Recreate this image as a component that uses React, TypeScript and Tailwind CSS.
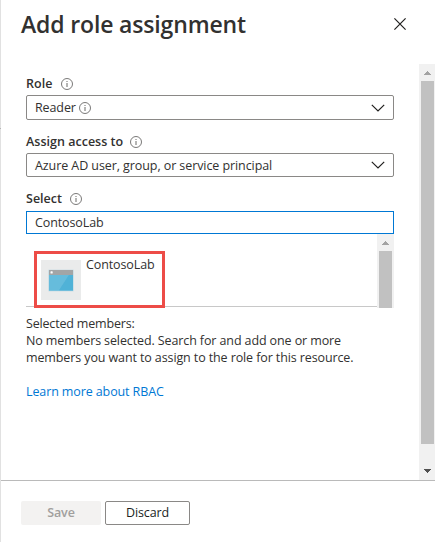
import React from "react";

function InfoIcon({ className = "" }: { className?: string }) {
  return (
    <svg viewBox="0 0 12 12" className={`h-3 w-3 shrink-0 ${className}`} fill="none">
      <circle cx="6" cy="6" r="5.5" stroke="#6b6a69" strokeWidth="0.9" />
      <path d="M6 5v4M6 3v1" stroke="#6b6a69" strokeWidth="1" />
    </svg>
  );
}

function Chevron() {
  return (
    <svg viewBox="0 0 14 8" className="h-2 w-3.5 shrink-0" fill="none">
      <path d="M0.8 0.8L7 7L13.2 0.8" stroke="#201f1e" strokeWidth="1.2" />
    </svg>
  );
}

function Arrow({ down = false }: { down?: boolean }) {
  return (
    <svg viewBox="0 0 7 4" className="h-1 w-[7px]" shapeRendering="crispEdges">
      {down ? <path d="M0 0h7v1h-1v1h-1v1h-1v1h-1v-1h-1v-1h-1v-1h-1z" fill="#505050" /> : <path d="M0 4h7v-1h-1v-1h-1v-1h-1v-1h-1v1h-1v1h-1v1h-1z" fill="#a3a3a3" />}
    </svg>
  );
}

function AppWindowIcon() {
  return (
    <svg viewBox="0 0 26 23" className="h-[23px] w-[26px]">
      <rect x="0" y="0.5" width="26" height="22" rx="1" fill="#cfe0e6" />
      <rect x="1" y="1" width="24" height="5" fill="#a3a5a6" />
      <rect x="1" y="6" width="24" height="15.5" fill="#59b4d9" />
      <path d="M1 6h20L11 21.5H1z" fill="#66bcdc" />
      <path d="M21 6h4v15.5H11z" fill="#50b2d7" />
      <rect x="2.5" y="2.3" width="2.2" height="2.2" rx="0.6" fill="#fff" />
    </svg>
  );
}

function Label({ text, className }: { text: string; className: string }) {
  return (
    <div className="flex h-[18px] items-center">
      <span className={`-mt-0.5 whitespace-nowrap font-semibold tracking-[0.02px] ${className}`}>{text}</span>
      <InfoIcon />
    </div>
  );
}

export default function App() {
  return (
    <div className="flex h-[542px] w-[435px] overflow-hidden bg-white font-['Open_Sans','Noto_Sans',sans-serif] text-[12.5px] leading-[17px] tracking-[-0.11px] text-[#323130]">
      <div className="flex w-px shrink-0 flex-col bg-[#e1e1e1]">
        <div className="mt-32 h-px bg-[#b5b5b5]" />
      </div>
      <div className="flex min-w-0 flex-1 flex-col">
        <header className="flex h-16 shrink-0 items-start justify-between pl-5 pr-[29px]">
          <h1 className="mt-2 whitespace-nowrap text-[23px] font-semibold leading-8 tracking-[-0.15px]">Add role assignment</h1>
          <svg viewBox="0 0 12 12" className="mt-[18px] h-3 w-3" fill="none">
            <path d="M0.4 0.4L11.6 11.6M11.6 0.4L0.4 11.6" stroke="#201f1e" strokeWidth="1.2" />
          </svg>
        </header>

        <div className="flex h-[416px] shrink-0">
          <main className="flex-1 pl-[25px] pr-[25px] pt-[11px]">
            <Label text="Role" className="w-[35px]" />
            <div className="mt-0.5 flex h-[25px] items-center rounded-xs border border-[#8a8886] pl-2 pr-2">
              <span className="w-[44px] whitespace-nowrap">Reader</span>
              <InfoIcon />
              <span className="flex-1" />
              <Chevron />
            </div>
            <div className="mt-[13px]"><Label text="Assign access to" className="w-[104px]" /></div>
            <div className="mt-0.5 flex h-6 items-center justify-between rounded-xs border border-[#8a8886] px-2">
              <span className="whitespace-nowrap tracking-[-0.08px]">Azure AD user, group, or service principal</span>
              <Chevron />
            </div>
            <div className="mt-[13px]"><Label text="Select" className="w-[44px]" /></div>
            <div className="mt-[3px] flex h-[23px] items-center border border-[#0078d4] px-2">ContosoLab</div>
            <div className="flex h-[74px]">
              <div className="h-[73px] flex-1 border-b border-[#c8c8c8] pl-2 pt-[17px]">
                <div className="flex h-[57px] w-[131px] border-[3px] border-[#ed4c47] pl-1 pt-1.5">
                  <div className="flex h-10 w-10 items-center justify-center bg-[#eaebeb]">
                    <AppWindowIcon />
                  </div>
                  <span className="-mt-1 ml-[5px]">ContosoLab</span>
                </div>
              </div>
              <div className="flex w-[17px] flex-col items-center bg-[#f1f1f1]">
                <div className="flex h-[17px] items-center"><Arrow /></div>
                <div className="w-[13px] flex-1 bg-[#c1c1c1]" />
              </div>
            </div>
            <div className="mt-[7px] whitespace-nowrap">
              <p className="tracking-[-0.18px]">Selected members:</p>
              <p>No members selected. Search for and add one or more</p>
              <p>members you want to assign to the role for this resource.</p>
            </div>
            <a className="mt-[17px] block text-[#0078d4]">Learn more about RBAC</a>
          </main>
          <div className="flex w-4 shrink-0 flex-col items-center bg-[#f1f1f1]">
            <div className="ml-px flex h-[17px] items-center"><Arrow /></div>
            <div className="ml-px h-[363px] w-[13px] bg-[#c1c1c1]" />
            <div className="mt-[25px] ml-px"><Arrow down /></div>
          </div>
        </div>

        <footer className="flex flex-1 items-start gap-1 border-t border-[#bababa] pl-5 pt-5">
          <button className="h-6 w-20 rounded-xs bg-[#f3f2f1] pb-0.5 font-semibold text-[#a19f9d]">Save</button>
          <button className="h-6 w-[85px] rounded-xs border border-[#8a8886] pb-0.5 font-medium text-[#201f1e]">Discard</button>
        </footer>
      </div>
    </div>
  );
}
